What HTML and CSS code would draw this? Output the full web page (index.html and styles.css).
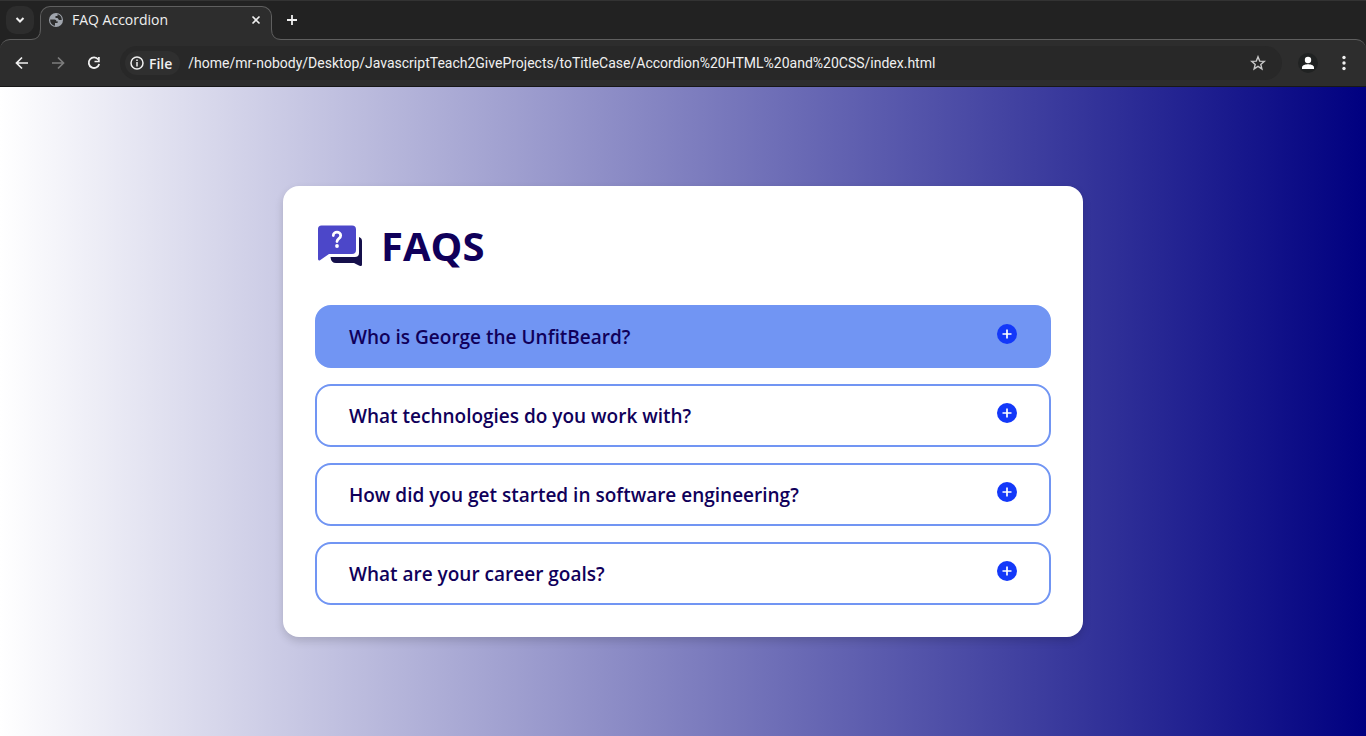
FILE: index.html
```html
<!DOCTYPE html>
<html lang="en">
<head>
<meta charset="utf-8">
<meta name="viewport" content="width=device-width, initial-scale=1">
<title>FAQ Accordion</title>
<link rel="stylesheet" href="styles.css">
</head>
<body>
<header class="browser">
  <div class="tab-strip">
    <button class="tab-search" type="button" aria-label="Search tabs">
      <svg width="10" height="8" viewBox="0 0 10 8"><path d="M1.5 2 5 5.5 8.5 2" fill="none" stroke="currentColor" stroke-width="2"/></svg>
    </button>
    <div class="tab-group">
      <svg class="flare" width="10" height="11" viewBox="0 0 10 11"><path d="M0 10.500Q9.500 10.500 9.500 0H10V11H0Z" fill="#2d2d2d"/><path d="M0 10.500Q9.500 10.500 9.500 0" fill="none" stroke="#5f5f5f"/></svg>
      <div class="tab">
        <svg width="16" height="16" viewBox="0 0 16 16"><circle cx="8" cy="8" r="7" fill="#a0a5ad"/><path d="M2.200 7.500H6.500Q8.500 7.500 8.500 9.500H10Q10 11 8.500 11H7V13.700C3.700 13.300 2 10.500 2.200 7.500ZM9.500 2.300V4H7.500V6H9.500L11 8H13.700C14 5.200 12.200 2.800 9.500 2.300Z" fill="#2d2d2d"/></svg>
        <span class="tab-title">FAQ Accordion</span>
        <button class="icon-button close" type="button" aria-label="Close tab">
          <svg width="10" height="10" viewBox="0 0 10 10"><path d="M1.500 1.500 8.500 8.500M8.500 1.500 1.500 8.500" stroke="currentColor" stroke-width="1.600"/></svg>
        </button>
      </div>
      <svg class="flare" width="10" height="11" viewBox="0 0 10 11"><path d="M10 10.500Q.5 10.500 .5 0H0V11H10Z" fill="#2d2d2d"/><path d="M10 10.500Q.5 10.500 .5 0" fill="none" stroke="#5f5f5f"/></svg>
    </div>
    <button class="icon-button new-tab" type="button" aria-label="New tab">
      <svg width="12" height="12" viewBox="0 0 12 12"><path d="M6 1V11M1 6H11" stroke="currentColor" stroke-width="1.800"/></svg>
    </button>
  </div>
  <div class="toolbar">
    <button class="icon-button" type="button" aria-label="Back">
      <svg width="16" height="16" viewBox="0 0 16 16"><path d="M14 8H3M8 2.500 2.500 8 8 13.500" fill="none" stroke="currentColor" stroke-width="1.700"/></svg>
    </button>
    <button class="icon-button muted" type="button" aria-label="Forward">
      <svg width="16" height="16" viewBox="0 0 16 16"><path d="M2 8H13M8 2.500 13.500 8 8 13.500" fill="none" stroke="currentColor" stroke-width="1.700"/></svg>
    </button>
    <button class="icon-button" type="button" aria-label="Reload">
      <svg width="16" height="16" viewBox="0 0 16 16"><path d="M12.300 4.500A5.300 5.300 0 1 0 13.200 9" fill="none" stroke="currentColor" stroke-width="1.800"/><path d="M12.900 2V6.500H8.500" fill="none" stroke="currentColor" stroke-width="1.700"/></svg>
    </button>
    <div class="address-bar">
      <button class="file-chip" type="button">
        <svg width="14" height="14" viewBox="0 0 14 14"><circle cx="7" cy="7" r="6" fill="none" stroke="currentColor" stroke-width="1.500"/><path d="M7 6V10.500M7 3.500V5" stroke="currentColor" stroke-width="1.500"/></svg>
        File
      </button>
      <input class="url" type="text" aria-label="Address" value="/home/mr-nobody/Desktop/JavascriptTeach2GiveProjects/toTitleCase/Accordion%20HTML%20and%20CSS/index.html">
      <button class="icon-button star" type="button" aria-label="Bookmark this page">
        <svg width="16" height="16" viewBox="0 0 16 16"><path d="M8 1.800 9.700 6.100 14.300 6.400 10.800 9.400 11.900 13.900 8 11.400 4.100 13.900 5.200 9.400 1.700 6.400 6.300 6.100Z" fill="none" stroke="currentColor" stroke-width="1.400"/></svg>
      </button>
    </div>
    <button class="icon-button profile" type="button" aria-label="Profile">
      <svg width="20" height="20" viewBox="0 0 20 20"><circle cx="10" cy="10" r="10" fill="#202222"/><circle cx="10" cy="7" r="3.200" fill="#fff"/><path d="M4 16V14.500C4 12 8 11.300 10 11.300S16 12 16 14.500V16Z" fill="#fff"/></svg>
    </button>
    <button class="icon-button" type="button" aria-label="Menu">
      <svg width="16" height="16" viewBox="0 0 16 16"><g fill="currentColor"><circle cx="8" cy="2.500" r="1.700"/><circle cx="8" cy="8" r="1.700"/><circle cx="8" cy="13.500" r="1.700"/></g></svg>
    </button>
  </div>
</header>
<main class="page">
  <section class="card">
    <div class="heading">
      <svg width="50" height="50" viewBox="0 0 50 50" aria-hidden="true"><path d="M6.500 4.500H37Q41 4.500 41 8.500V29Q41 33 37 33H14L5 39.300Q3 40 3 38V8Q3 4.500 6.500 4.500Z" fill="#4c47c9"/><path d="M44 16Q47 17 47 20V43.500Q47 46 44 44.500L39 42H21Q16 42 15.500 36H40Q44 36 44 32Z" fill="#15104b"/><path d="M18.300 14.500C18.300 10 25.700 10.200 25.700 14.500C25.700 17.800 22 17.500 22 20.500" fill="none" stroke="#fff" stroke-width="2.800" stroke-linecap="round"/><circle cx="22" cy="25" r="1.900" fill="#fff"/></svg>
      <h1 class="title">FAQS</h1>
    </div>
    <div class="accordion">
      <button class="item active" type="button" aria-expanded="false"><span>Who is George the UnfitBeard?</span><svg class="plus" width="20" height="20" viewBox="0 0 20 20"><circle cx="10" cy="10" r="10" fill="#1338f9"/><path d="M10 5.500V14.500M5.500 10H14.500" stroke="#fff" stroke-width="1.700"/></svg></button>
      <button class="item" type="button" aria-expanded="false"><span>What technologies do you work with?</span><svg class="plus" width="20" height="20" viewBox="0 0 20 20"><circle cx="10" cy="10" r="10" fill="#1338f9"/><path d="M10 5.500V14.500M5.500 10H14.500" stroke="#fff" stroke-width="1.700"/></svg></button>
      <button class="item" type="button" aria-expanded="false"><span>How did you get started in software engineering?</span><svg class="plus" width="20" height="20" viewBox="0 0 20 20"><circle cx="10" cy="10" r="10" fill="#1338f9"/><path d="M10 5.500V14.500M5.500 10H14.500" stroke="#fff" stroke-width="1.700"/></svg></button>
      <button class="item" type="button" aria-expanded="false"><span>What are your career goals?</span><svg class="plus" width="20" height="20" viewBox="0 0 20 20"><circle cx="10" cy="10" r="10" fill="#1338f9"/><path d="M10 5.500V14.500M5.500 10H14.500" stroke="#fff" stroke-width="1.700"/></svg></button>
    </div>
  </section>
</main>
</body>
</html>
```
FILE: styles.css
```css
* {
  box-sizing: border-box;
}

body {
  margin: 0;
  min-height: 100vh;
  display: flex;
  flex-direction: column;
  font-family: "Open Sans", "Noto Sans", sans-serif;
}

button {
  font: inherit;
  color: inherit;
  border: 0;
  padding: 0;
  background: none;
  cursor: pointer;
}

svg {
  display: block;
  flex: none;
}

.browser {
  background: #222;
  color: #f0f0f0;
  border-top: 1px solid #333;
}

.tab-strip {
  display: flex;
  align-items: center;
  padding: 5px 6px 0;
}

.tab-search {
  display: grid;
  place-items: center;
  width: 28px;
  height: 28px;
  margin-bottom: 5px;
  border-radius: 10px;
  background: #2d2d2d;
}

.tab-group {
  display: flex;
  align-items: flex-end;
  margin: 0 0 -1px -3px;
  z-index: 1;
}

.tab {
  display: flex;
  align-items: center;
  gap: 8px;
  width: 232px;
  height: 34px;
  margin: 0 -1px;
  padding: 0 10px 7px 7px;
  border: 1px solid #5f5f5f;
  border-bottom: 0;
  border-radius: 10px 10px 0 0;
  background: #2d2d2d;
}

.flare {
  z-index: 1;
}

.tab-title {
  flex: 1;
  font-family: "Open Sans", sans-serif;
  font-size: 14px;
  line-height: 20px;
}

.icon-button {
  display: grid;
  place-items: center;
  flex: none;
}

.new-tab {
  margin: 0 0 5px 5px;
}

.toolbar {
  display: flex;
  align-items: center;
  gap: 20px;
  height: 48px;
  padding: 0 14px;
  border-top: 1px solid #5f5f5f;
  border-bottom: 1px solid #181818;
  border-radius: 10px 10px 0 0;
  background: #2d2d2d;
}

.muted {
  color: #7c7c7c;
}

.address-bar {
  flex: 1;
  display: flex;
  align-items: center;
  gap: 8px;
  height: 34px;
  margin-left: -2px;
  margin-right: -4px;
  padding: 0 16px 0 5px;
  border-radius: 17px;
  background: #282828;
}

.file-chip {
  display: flex;
  align-items: center;
  gap: 5px;
  height: 24px;
  padding: 0 8px 0 5px;
  border-radius: 12px;
  background: #2f2f2f;
  font-family: "Open Sans", sans-serif;
  font-size: 14px;
  font-weight: 600;
}

.url {
  flex: 1;
  min-width: 0;
  padding: 0;
  border: 0;
  outline: 0;
  background: none;
  color: #f0f0f0;
  font-family: Roboto, sans-serif;
  font-size: 14px;
  line-height: 20px;
}

.star {
  color: #c8c8c8;
}

.profile {
  margin-right: -2px;
}

.page {
  flex: 1;
  display: grid;
  place-items: center;
  padding: 32px;
  background: linear-gradient(to right, #fff, navy);
}

.card {
  width: 100%;
  max-width: 800px;
  padding: 32px;
  border-radius: 16px;
  background: #fff;
  box-shadow: 0 4px 8px rgba(0, 0, 0, 0.15);
}

.heading {
  display: flex;
  align-items: center;
  gap: 16px;
  padding-bottom: 32px;
}

.title {
  margin: 0;
  color: #10005a;
  font-size: 40px;
  line-height: 55px;
  font-weight: 700;
}

.accordion {
  display: grid;
  gap: 16px;
}

.item {
  display: flex;
  align-items: flex-start;
  justify-content: space-between;
  gap: 16px;
  padding: 16px 32px 14px;
  border: 2px solid #7195f3;
  border-radius: 16px;
  color: #10005a;
  font-size: 19px;
  line-height: 29px;
  font-weight: 600;
  text-align: left;
}

.item.active {
  background: #7195f3;
}

.plus {
  margin-top: 1px;
}
```
